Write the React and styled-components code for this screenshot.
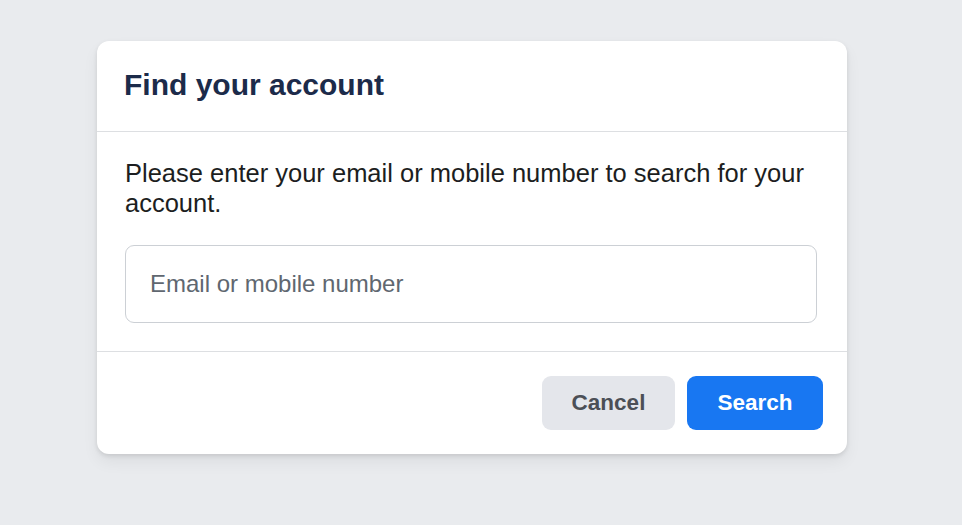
import React from "react";
import styled, { createGlobalStyle } from "styled-components";

const Global = createGlobalStyle`
  html, body { margin: 0; padding: 0; background: #e9ebee; }
  body { font-family: "Liberation Sans", Arial, sans-serif; }
  * { box-sizing: border-box; }
`;

const Page = styled.div`
  min-height: 525px;
  padding: 41px 0 0 97px;
  display: flex;
  align-items: flex-start;
`;

const Card = styled.div`
  width: 750px;
  background: #fff;
  border-radius: 12px;
  box-shadow: 0 2px 4px rgba(0, 0, 0, 0.1), 0 8px 16px rgba(0, 0, 0, 0.06);
  display: flex;
  flex-direction: column;
`;

const Header = styled.div`
  height: 91px;
  padding: 0 27px;
  display: flex;
  align-items: center;
  border-bottom: 1px solid #dddfe2;
`;

const Title = styled.h2`
  margin: 0;
  font-size: 30px;
  font-weight: 700;
  color: #1c2b4a;
  line-height: 36px;
  padding-bottom: 2px;
`;

const Body = styled.div`
  padding: 26px 30px 28px 28px;
  border-bottom: 1px solid #dddfe2;
  display: flex;
  flex-direction: column;
  gap: 27px;
`;

const Text = styled.p`
  margin: 0;
  font-size: 25.5px;
  line-height: 30px;
  color: #1c1e21;
`;

const Input = styled.input`
  height: 78px;
  width: 100%;
  border: 1px solid #ccd0d5;
  border-radius: 9px;
  padding: 0 24px;
  font-family: "Liberation Sans", Arial, sans-serif;
  font-size: 24px;
  color: #1c1e21;
  outline: none;
  &::placeholder { color: #606770; }
`;

const Footer = styled.div`
  padding: 24px;
  display: flex;
  justify-content: flex-end;
  gap: 12px;
`;

const Button = styled.button`
  height: 54px;
  padding: 0 29px;
  border: none;
  border-radius: 9px;
  font-family: "Liberation Sans", Arial, sans-serif;
  font-size: 22.5px;
  font-weight: 700;
  cursor: pointer;
  background: ${(p) => (p.$primary ? "#1877f2" : "#e4e6eb")};
  color: ${(p) => (p.$primary ? "#fff" : "#4b4f56")};
  min-width: ${(p) => (p.$primary ? "136px" : "133px")};
`;

export default function App() {
  return (
    <>
      <Global />
      <Page>
        <Card>
          <Header>
            <Title>Find your account</Title>
          </Header>
          <Body>
            <Text>Please enter your email or mobile number to search for your account.</Text>
            <Input type="text" placeholder="Email or mobile number" />
          </Body>
          <Footer>
            <Button>Cancel</Button>
            <Button $primary>Search</Button>
          </Footer>
        </Card>
      </Page>
    </>
  );
}
